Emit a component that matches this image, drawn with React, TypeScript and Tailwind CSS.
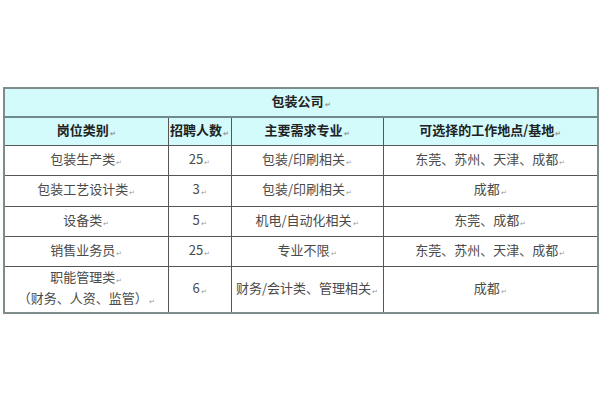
const rows = [
  { job: ["包装生产类"], num: "25", major: "包装/印刷相关", place: "东莞、苏州、天津、成都", h: "h-[30px]" },
  { job: ["包装工艺设计类"], num: "3", major: "包装/印刷相关", place: "成都", h: "h-[31px]" },
  { job: ["设备类"], num: "5", major: "机电/自动化相关", place: "东莞、成都", h: "h-[30px]" },
  { job: ["销售业务员"], num: "25", major: "专业不限", place: "东莞、苏州、天津、成都", h: "h-[30px]" },
  { job: ["职能管理类", "（财务、人资、监管）"], num: "6", major: "财务/会计类、管理相关", place: "成都", h: "h-[47px]" },
]

// little Word paragraph mark after each text
function Mark() {
  return <span className="ml-[1px] align-[-1px] text-[7px] text-[#999]">↵</span>
}

export default function App() {
  return (
    <div
      className="w-[600px] h-[400px] bg-white pt-[87px] pl-[3px]"
      style={{ fontFamily: '"Noto Sans CJK SC", "Liberation Serif", serif' }}
    >
      <table className="table-fixed border-collapse w-[594px] border-2 border-[#7f8c8c] text-[13px] leading-[18px]">
        <colgroup>
          <col className="w-[164px]" />
          <col className="w-[63px]" />
          <col className="w-[152px]" />
          <col className="w-[215px]" />
        </colgroup>
        <thead>
          <tr className="h-[29px] bg-[#d3fbfb]">
            <th colSpan={4} className="border-b-2 border-[#6f8a8a] font-bold text-[#222] text-center">
              包装公司<Mark />
            </th>
          </tr>
          <tr className="h-[28px] bg-[#d3fbfb] font-bold text-[#222]">
            <th className="border border-[#555] font-bold">岗位类别<Mark /></th>
            <th className="border border-[#555] font-bold whitespace-nowrap">招聘人数<Mark /></th>
            <th className="border border-[#555] font-bold">主要需求专业<Mark /></th>
            <th className="border border-[#555] font-bold">可选择的工作地点/基地<Mark /></th>
          </tr>
        </thead>
        <tbody className="text-[#4a4a4a]">
          {rows.map((r) => (
            <tr key={r.job[0]} className={r.h}>
              <td className="border border-[#555] text-center">
                {r.job.map((line) => (
                  <div key={line}>
                    {line}
                    <Mark />
                  </div>
                ))}
              </td>
              <td className="border border-[#555] text-center">
                {r.num}
                <Mark />
              </td>
              <td className="border border-[#555] text-center whitespace-nowrap">
                {r.major}
                <Mark />
              </td>
              <td className="border border-[#555] text-center">
                {r.place}
                <Mark />
              </td>
            </tr>
          ))}
        </tbody>
      </table>
    </div>
  )
}
